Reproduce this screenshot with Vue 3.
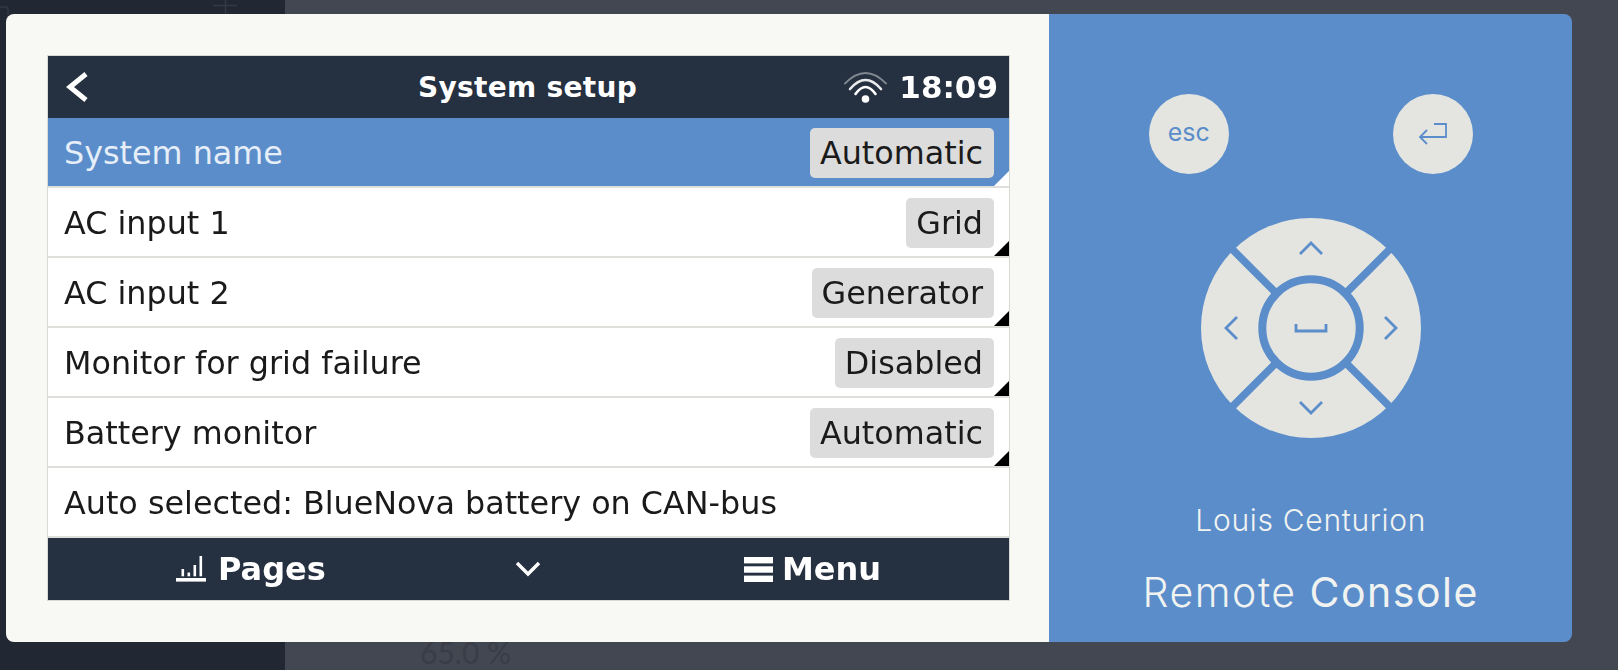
<template>
  <div class="page">
    <aside class="sidebar">
      <svg class="ghost" width="285" height="16" viewBox="0 0 285 16" fill="none" stroke="#333944" stroke-width="1.5">
        <path d="M0 7 H5 Q8 7 8 10 V15" />
        <path d="M213 5.500 H237 M225.500 0 V14" />
      </svg>
    </aside>
    <main class="content">
      <span class="percent">65.0 %</span>
    </main>

    <div class="modal">
      <div class="left">
        <div class="console">
          <header class="head">
            <svg class="back" width="24" height="32" viewBox="0 0 24 32">
              <path d="M20 3 L4 16 L20 29" fill="none" stroke="#fff" stroke-width="5" />
            </svg>
            <div class="title">System setup</div>
            <div class="status">
              <svg width="43" height="31" viewBox="0 0 43 31" fill="none" stroke-linecap="round">
                <path d="M1 11.500 Q21.500 -9.500 42 11.500" stroke="#7f8791" stroke-width="1.800" />
                <path d="M6 17 Q21.500 -1 37 17" stroke="#e8eaec" stroke-width="2.600" />
                <path d="M11.500 22 Q21.500 8 31.500 22" stroke="#fff" stroke-width="2.600" />
                <circle cx="21.500" cy="27" r="3.800" fill="#fff" />
              </svg>
              <span class="time">18:09</span>
            </div>
          </header>

          <div
            v-for="row in rows"
            :key="row.label"
            class="row"
            :class="{ selected: row.selected }"
          >
            <span>{{ row.label }}</span>
            <template v-if="row.value">
              <span class="badge">{{ row.value }}</span>
              <i class="corner"></i>
            </template>
          </div>

          <footer class="foot">
            <div class="foot-item">
              <svg width="30" height="26" viewBox="0 0 30 26" fill="#fff">
                <rect x="0" y="22" width="30" height="3.600" />
                <rect x="5.500" y="13" width="2.600" height="7.300" />
                <rect x="11.500" y="16.500" width="2.600" height="3.800" />
                <rect x="17.500" y="9" width="2.600" height="11.300" />
                <rect x="23.500" y="0" width="2.600" height="20.300" />
              </svg>
              <span>Pages</span>
            </div>
            <svg class="chevron" width="26" height="18" viewBox="0 0 26 18">
              <path d="M2 3 L13 14 L24 3" fill="none" stroke="#fff" stroke-width="3.400" />
            </svg>
            <div class="foot-item menu">
              <svg width="29" height="25" viewBox="0 0 29 25" fill="#fff">
                <rect y="0" width="29" height="6.400" />
                <rect y="9.300" width="29" height="6.400" />
                <rect y="18.600" width="29" height="6.400" />
              </svg>
              <span>Menu</span>
            </div>
          </footer>
        </div>
      </div>

      <div class="right">
        <div class="keys">
          <button class="key esc">esc</button>
          <button class="key">
            <svg width="30" height="22" viewBox="0 0 30 22" fill="none" stroke="#5a8dca" stroke-width="1.800">
              <path d="M16 1 H28 V14 H2" />
              <path d="M9 7 L2 14 L9 21" />
            </svg>
          </button>
        </div>

        <svg class="dpad" width="220" height="220" viewBox="0 0 220 220">
          <circle cx="110" cy="110" r="110" fill="#e4e5e0" />
          <path d="M24 24 L74 74 M196 24 L146 74 M24 196 L74 146 M196 196 L146 146" stroke="#5a8dca" stroke-width="7.500" />
          <circle cx="110" cy="110" r="48.700" fill="#e4e5e0" stroke="#5a8dca" stroke-width="8" />
          <g fill="none" stroke="#5a8dca" stroke-width="2.800">
            <path d="M99 36 L110 25 L121 36" />
            <path d="M99 184 L110 195 L121 184" />
            <path d="M36 99 L25 110 L36 121" />
            <path d="M184 99 L195 110 L184 121" />
            <path d="M95 106 V113 H125 V106" />
          </g>
        </svg>

        <div class="user">Louis Centurion</div>
        <div class="product">Remote <span class="strong">Console</span></div>
      </div>
    </div>
  </div>
</template>

<script setup>
const rows = [
  { label: 'System name', value: 'Automatic', selected: true },
  { label: 'AC input 1', value: 'Grid' },
  { label: 'AC input 2', value: 'Generator' },
  { label: 'Monitor for grid failure', value: 'Disabled' },
  { label: 'Battery monitor', value: 'Automatic' },
  { label: 'Auto selected: BlueNova battery on CAN-bus' }
]
</script>

<style>
html, body {
  margin: 0;
  overflow: hidden;
}
</style>

<style scoped>
.page {
  position: relative;
  display: flex;
  width: 1618px;
  height: 670px;
  overflow: hidden;
  font-family: "DejaVu Sans", sans-serif;
}

.sidebar {
  width: 285px;
  background: #222833;
}

.ghost {
  display: block;
}

.content {
  flex: 1;
  background: #434751;
  position: relative;
}

.percent {
  position: absolute;
  left: 135px;
  top: 634px;
  color: #393d47;
  font: 30px "Lato", sans-serif;
}

.modal {
  position: absolute;
  left: 6px;
  top: 14px;
  width: 1566px;
  height: 628px;
  display: flex;
  border-radius: 8px;
  overflow: hidden;
}

.left {
  width: 1042.5px;
  box-sizing: border-box;
  padding: 42px 0 0 42px;
  background: #f8f9f4;
}

.console {
  width: 961px;
  height: 544px;
  box-shadow: 0 0 0 1px #d8d9d4;
  background: #fff;
  display: flex;
  flex-direction: column;
  filter: blur(0.4px);
}

.head {
  height: 62px;
  flex: none;
  background: #253040;
  color: #fff;
  display: grid;
  grid-template-columns: 1fr auto 1fr;
  align-items: center;
  padding: 0 11px 0 18px;
}

.back {
  display: block;
}

.title {
  margin-right: 9px;
  font-weight: bold;
  font-size: 28px;
  letter-spacing: 0.3px;
}

.status {
  display: flex;
  justify-content: flex-end;
  align-items: center;
  gap: 12px;
}

.time {
  font-weight: bold;
  font-size: 31px;
}

.row {
  position: relative;
  height: 70px;
  flex: none;
  box-sizing: border-box;
  border-bottom: 2px solid #dfdfdc;
  display: flex;
  justify-content: space-between;
  align-items: center;
  padding: 0 15px 0 16px;
  color: #1a1a1a;
  font-size: 31.8px;
}

.row.selected {
  background: #5a8dca;
  color: #e6eef8;
}

.badge {
  margin-top: 1px;
  background: #dcdcdc;
  color: #1a1a1a;
  border-radius: 5px;
  height: 50px;
  line-height: 50px;
  padding: 0 11px 0 10px;
}

.corner {
  position: absolute;
  right: 0;
  bottom: 0;
  width: 15px;
  height: 15px;
  background: #000;
  clip-path: polygon(100% 0, 100% 100%, 0 100%);
}

.selected .corner {
  background: #fff;
}

.foot {
  flex: 1;
  background: #253040;
  color: #fff;
  display: flex;
  justify-content: space-between;
  align-items: center;
  padding: 0 128px;
  font-weight: bold;
  font-size: 32px;
}

.foot-item {
  display: flex;
  align-items: center;
  gap: 12px;
}

.foot-item.menu {
  gap: 9px;
}

.chevron {
  position: relative;
  left: -7px;
}

.right {
  flex: 1;
  background: #5a8dca;
  display: flex;
  flex-direction: column;
  align-items: center;
  padding: 80px 0 0 1px;
  font-family: "Inter", sans-serif;
  color: #f1f3f1;
}

.keys {
  width: 324px;
  display: flex;
  justify-content: space-between;
}

.key {
  width: 80px;
  height: 80px;
  border: 0;
  padding: 0;
  border-radius: 50%;
  background: #e4e5e0;
  display: flex;
  align-items: center;
  justify-content: center;
}

.esc {
  padding-bottom: 5px;
  color: #5a8dca;
  font: 400 25px "Inter", sans-serif;
}

.dpad {
  display: block;
  margin-top: 44px;
}

.user {
  margin-top: 64px;
  font-weight: 300;
  font-size: 30px;
  letter-spacing: 0.7px;
}

.product {
  margin-top: 29px;
  font-weight: 300;
  font-size: 41px;
  letter-spacing: 1.5px;
}

.strong {
  font-weight: 400;
}
</style>
